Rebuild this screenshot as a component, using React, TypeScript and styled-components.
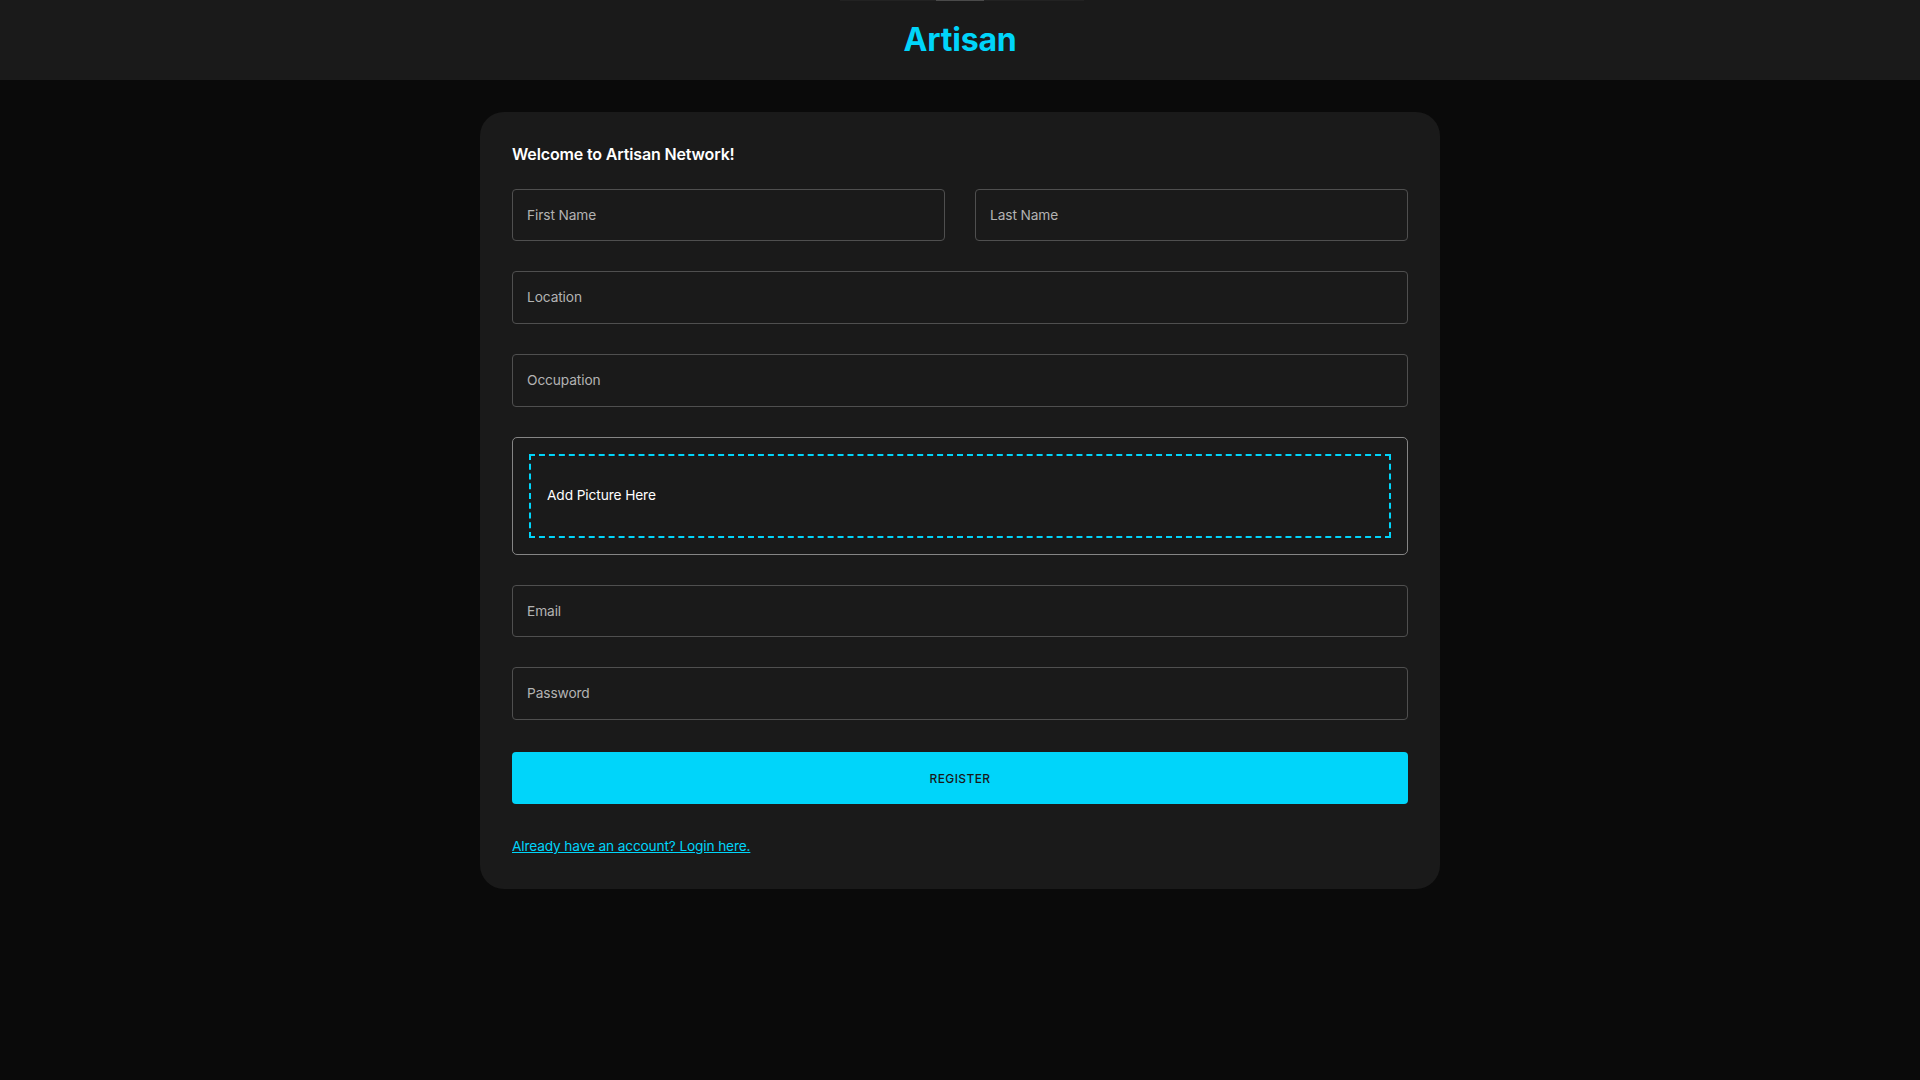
import React from "react";
import styled, { createGlobalStyle } from "styled-components";

const Global = createGlobalStyle`
  html, body { margin: 0; padding: 0; }
  body {
    background: #0a0a0a;
    color: #ffffff;
    font-family: Inter, "Noto Sans", "Liberation Sans", sans-serif;
    font-size: 13.714px;
    line-height: 1.5;
  }
  * { box-sizing: border-box; }
`;

const Page = styled.div`
  min-height: 1080px;
  background: #0a0a0a;
`;

const Header = styled.header`
  position: relative;
  height: 80px;
  background: #1a1a1a;
  display: flex;
  align-items: center;
  justify-content: center;
`;

const TopTrack = styled.div`
  position: absolute;
  top: 0;
  left: 840px;
  width: 244px;
  height: 1px;
  background: #222222;
`;

const TopThumb = styled.div`
  position: absolute;
  top: 0;
  left: 96px;
  width: 48px;
  height: 1px;
  background: #4a4a4a;
`;

const Logo = styled.h1`
  margin: 0;
  font-size: 32px;
  font-weight: 700;
  color: #00d5fa;
  letter-spacing: -0.2px;
  line-height: 1.2;
`;

const Card = styled.main`
  width: 960px;
  margin: 32px auto;
  padding: 32px;
  background: #1a1a1a;
  border-radius: 24px;
`;

const Title = styled.h5`
  margin: 0 0 24px;
  font-size: 16px;
  font-weight: 600;
  line-height: 20.5px;
  letter-spacing: -0.15px;
  color: #ffffff;
`;

const Form = styled.form`
  display: grid;
  grid-template-columns: repeat(4, minmax(0, 1fr));
  gap: 30px;
`;

const Field = styled.div<{ $span: number }>`
  grid-column: span ${(p) => p.$span};
  height: 52.7px;
  border: 1px solid #4f4f4f;
  border-radius: 4px;
  padding: 0 14px;
  display: flex;
  align-items: center;
  color: #b3b3b3;
  font-size: 13.714px;
  letter-spacing: -0.1px;
`;

const PictureBox = styled.div`
  grid-column: span 4;
  border: 1px solid #858585;
  border-radius: 5px;
  padding: 16px;
`;

const Dropzone = styled.div`
  border: 2px dashed #00d5fa;
  padding: 0 16px;
  cursor: pointer;
`;

const DropText = styled.p`
  margin: 0;
  padding: 29.7px 0 29.7px;
  line-height: 20.6px;
  color: #ffffff;
  font-size: 13.714px;
  letter-spacing: -0.1px;
`;

const Actions = styled.div`
  grid-column: span 4;
  margin-top: 2px;
`;

const RegisterButton = styled.button`
  width: 100%;
  height: 52.5px;
  margin: 0 0 32px;
  border: none;
  border-radius: 4px;
  background: #00d5fa;
  color: #1a1a1a;
  font-family: inherit;
  font-size: 12px;
  font-weight: 500;
  letter-spacing: 0.4px;
  text-transform: uppercase;
  cursor: pointer;
`;

const LoginLink = styled.a`
  display: inline-block;
  color: #00d5fa;
  text-decoration: underline;
  font-size: 13.714px;
  line-height: 21px;
  letter-spacing: -0.15px;
  cursor: pointer;
`;

export default function App() {
  return (
    <Page>
      <Global />
      <Header>
        <TopTrack>
          <TopThumb />
        </TopTrack>
        <Logo>Artisan</Logo>
      </Header>
      <Card>
        <Title>Welcome to Artisan Network!</Title>
        <Form onSubmit={(e) => e.preventDefault()}>
          <Field $span={2}>First Name</Field>
          <Field $span={2}>Last Name</Field>
          <Field $span={4}>Location</Field>
          <Field $span={4}>Occupation</Field>
          <PictureBox>
            <Dropzone>
              <DropText>Add Picture Here</DropText>
            </Dropzone>
          </PictureBox>
          <Field $span={4}>Email</Field>
          <Field $span={4}>Password</Field>
          <Actions>
            <RegisterButton type="submit">Register</RegisterButton>
            <LoginLink>Already have an account? Login here.</LoginLink>
          </Actions>
        </Form>
      </Card>
    </Page>
  );
}
